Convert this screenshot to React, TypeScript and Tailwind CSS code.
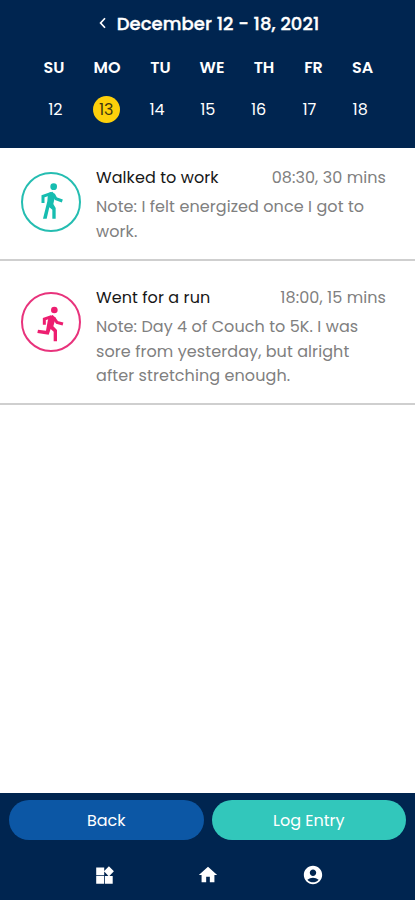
import React from 'react';
import { MdHome, MdAccountCircle } from 'react-icons/md';

interface Day {
  label: string;
  date: number;
  width: string;
}

const days: Day[] = [
  { label: 'SU', date: 12, width: 'w-[50px]' },
  { label: 'MO', date: 13, width: 'w-[56px]' },
  { label: 'TU', date: 14, width: 'w-[51px]' },
  { label: 'WE', date: 15, width: 'w-[52px]' },
  { label: 'TH', date: 16, width: 'w-[52px]' },
  { label: 'FR', date: 17, width: 'w-[47px]' },
  { label: 'SA', date: 18, width: 'w-[51px]' },
];

const WalkIcon = () => (
  <svg width="44" height="52" viewBox="-3 2 132 156" className="shrink-0" fill="none" stroke="currentColor" strokeWidth="9">
    <circle cx="71" cy="34" r="10" fill="currentColor" stroke="none" />
    <path d="M64 54 39 63V83" />
    <path d="M70 57 78 70 97 77" />
    <path d="M54 54 67 49 76 58 70 86 77 98V130H67V103L58 96 50 130H39L52 78Z" fill="currentColor" stroke="none" />
  </svg>
);

const RunIcon = () => (
  <svg width="44" height="52" viewBox="-3 0 132 156" className="shrink-0" fill="none" stroke="currentColor" strokeWidth="9">
    <circle cx="73" cy="42" r="10" fill="currentColor" stroke="none" />
    <path d="M64 62 43 69V86" />
    <path d="M71 65 81 79 99 84" />
    <path d="M56 62 68 57 77 66 70 91 81 102V136H71V107L62 99 56 116 22 111 24 101 48 104 53 76Z" fill="currentColor" stroke="none" />
  </svg>
);

const WidgetsIcon = () => (
  <svg width="18" height="18" viewBox="0 0 18 18" fill="currentColor">
    <path d="M.2 1.5H8.2V9.2H.2zM.2 10H8.2v7.7H.2zM9 10h7.7v7.7H9zM12.9.2l5 5.1-5 5.1L8 5.3z" />
  </svg>
);

const entries = [
  {
    title: 'Walked to work',
    time: '08:30, 30 mins',
    note: ['Note: I felt energized once I got to', 'work.'],
    icon: <WalkIcon />,
    ring: 'border-[#25bdb1] text-[#16bdb0]',
    box: 'h-[113px] pt-6',
  },
  {
    title: 'Went for a run',
    time: '18:00, 15 mins',
    note: ['Note: Day 4 of Couch to 5K. I was', 'sore from yesterday, but alright', 'after stretching enough.'],
    icon: <RunIcon />,
    ring: 'border-[#e8337c] text-[#ed1e70]',
    box: 'h-[144px] pt-[31px]',
  },
];

const App: React.FC = () => {
  return (
    <div className="w-full h-screen flex flex-col bg-white font-['Poppins','Inter',sans-serif] overflow-hidden">
      {/* Week header */}
      <header className="h-[148px] shrink-0 bg-[#002550] text-white">
        <div className="flex items-center justify-center h-[46px] gap-[11px] pl-[3px]">
          <svg width="7" height="12" viewBox="0 0 7 12" fill="none" stroke="currentColor" strokeWidth="1.7">
            <path d="M6 1.2 1.6 6 6 10.8" />
          </svg>
          <h1 className="text-[18px] font-medium tracking-[0.07px] [-webkit-text-stroke:0.35px]">December 12 - 18, 2021</h1>
        </div>
        <div className="flex pl-[29px] h-[44px] items-center">
          {days.map((d) => (
            <span key={d.label} className={`${d.width} text-center text-base font-semibold`}>{d.label}</span>
          ))}
        </div>
        <div className="flex pl-[30px] h-[39px] items-center">
          {days.map((d) => (
            <div key={d.date} className="w-[50.8px] flex justify-center">
              <span className={`w-[27px] h-[27px] rounded-full flex items-center justify-center text-base ${d.date === 13 ? 'bg-[#fdd00b] text-[#3d3511]' : ''}`}>
                {d.date}
              </span>
            </div>
          ))}
        </div>
      </header>

      {/* Entries */}
      <main className="flex-1">
        {entries.map((entry) => (
          <div key={entry.title} className={`${entry.box} flex border-b-2 border-[#cfcfcf] pl-[21px] pr-[29px]`}>
            <div className={`w-[60px] h-[60px] mr-[15px] shrink-0 rounded-full border-2 flex items-center justify-center ${entry.ring}`}>
              {entry.icon}
            </div>
            <div className="flex-1 -mt-1.5 tracking-[0.08px]">
              <div className="flex justify-between text-base leading-6 whitespace-nowrap">
                <span className="text-[#171717]">{entry.title}</span>
                <span className="text-[#808080]">{entry.time}</span>
              </div>
              <p className="mt-[5px] text-base leading-[24.5px] text-[#808080] whitespace-nowrap">
                {entry.note.map((line) => (
                  <span key={line} className="block">{line}</span>
                ))}
              </p>
            </div>
          </div>
        ))}
      </main>

      {/* Actions and tab bar */}
      <footer className="h-[107px] shrink-0 bg-[#002550] text-white">
        <div className="flex gap-2 px-[9px] pt-[7px]">
          <button className="flex-1 h-10 pt-0.5 rounded-full bg-[#0c57a5] text-base">Back</button>
          <button className="flex-1 h-10 pt-0.5 rounded-full bg-[#32c7bb] text-base">Log Entry</button>
        </div>
        <nav className="flex items-center justify-center gap-[83px] pt-6 pl-1">
          <WidgetsIcon />
          <MdHome size={22} />
          <MdAccountCircle size={22} />
        </nav>
      </footer>
    </div>
  );
};

export default App;
